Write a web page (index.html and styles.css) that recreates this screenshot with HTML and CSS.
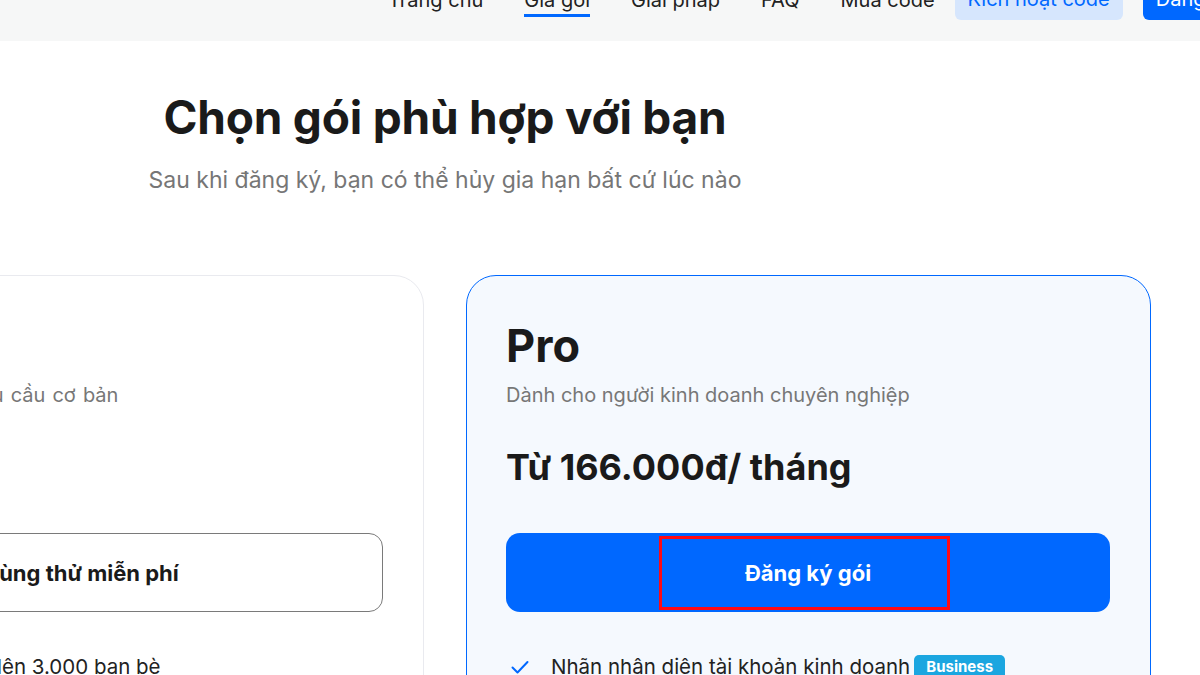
FILE: index.html
```html
<!DOCTYPE html>
<html lang="vi">
<head>
<meta charset="utf-8">
<title>Chọn gói</title>
<link rel="stylesheet" href="styles.css">
</head>
<body>
<header class="topbar">
  <nav class="nav">
    <a class="nav-link">Trang chủ</a>
    <a class="nav-link active">Giá gói</a>
    <a class="nav-link">Giải pháp</a>
    <a class="nav-link">FAQ</a>
    <a class="nav-link">Mua code</a>
    <a class="nav-btn light">Kích hoạt code</a>
    <a class="nav-btn solid">Đăng nhập</a>
  </nav>
</header>
<main class="pricing">
  <h1 class="title">Chọn gói phù hợp với bạn</h1>
  <p class="subtitle">Sau khi đăng ký, bạn có thể hủy gia hạn bất cứ lúc nào</p>
  <div class="cards">
    <section class="card">
      <h2 class="plan">Free</h2>
      <p class="plan-desc">Dành cho người có nhu cầu cơ bản</p>
      <p class="price">Miễn phí</p>
      <button class="cta outline">Dùng thử miễn phí</button>
      <ul class="features">
        <li><span class="check"><svg viewBox="0 0 20 20" width="20" height="20"><path d="M2.5 10.5 L7.5 15.5 L17.5 5" fill="none" stroke="#0068ff" stroke-width="2" stroke-linecap="round" stroke-linejoin="round"/></svg></span>Kết bạn với tối đa lên 3.000 bạn bè</li>
      </ul>
    </section>
    <section class="card pro">
      <h2 class="plan">Pro</h2>
      <p class="plan-desc">Dành cho người kinh doanh chuyên nghiệp</p>
      <p class="price">Từ 166.000đ/ tháng</p>
      <button class="cta solid">Đăng ký gói<span class="mark"></span></button>
      <ul class="features">
        <li><span class="check"><svg viewBox="0 0 20 20" width="20" height="20"><path d="M2.5 10.5 L7.5 15.5 L17.5 5" fill="none" stroke="#0068ff" stroke-width="2" stroke-linecap="round" stroke-linejoin="round"/></svg></span>Nhãn nhận diện tài khoản kinh doanh <span class="badge">Business</span></li>
      </ul>
    </section>
  </div>
</main>
</body>
</html>
```
FILE: styles.css
```css
* { box-sizing: border-box; }
html, body { margin: 0; padding: 0; }
body {
  width: 1200px;
  height: 675px;
  overflow: hidden;
  background: #ffffff;
  font-family: Inter, "Noto Sans", "Liberation Sans", sans-serif;
  color: #1a1a1a;
}
.topbar {
  height: 41px;
  background: #f6f7f7;
  display: flex;
  align-items: flex-end;
  overflow: hidden;
}
.nav {
  display: flex;
  align-items: flex-end;
  padding-left: 388px;
  margin-bottom: 21px;
  white-space: nowrap;
}
.nav-link {
  font-size: 20px;
  line-height: 22px;
  color: #222;
  margin-right: 41px;
  padding-bottom: 3px;
  border-bottom: 3px solid transparent;
  margin-bottom: 3px;
}
.nav-link.active { border-bottom-color: #0068ff; }
.nav-link:nth-child(5) { margin-right: 20px; }
.nav-btn {
  font-size: 20px;
  height: 42px;
  display: flex;
  align-items: center;
  padding: 0 13px;
  border-radius: 6px;
  margin-right: 20px;
}
.nav-btn.light { background: #d6e6fd; color: #0068ff; }
.nav-btn.solid { background: #0068ff; color: #fff; }
.pricing {
  width: 1412px;
  margin-left: -261px;
  display: flex;
  flex-direction: column;
  align-items: center;
}
.title {
  margin: 48px 0 0;
  font-size: 46px;
  line-height: 56px;
  font-weight: 700;
  color: #1a1a1a;
  letter-spacing: -0.2px;
}
.subtitle {
  margin: 20px 0 0;
  font-size: 23px;
  line-height: 30px;
  color: #767676;
}
.cards {
  margin-top: 80px;
  display: flex;
  gap: 42px;
}
.card {
  width: 685px;
  height: 460px;
  border: 1px solid #e9eaef;
  border-radius: 30px;
  background: #fff;
  padding: 44px 39px 0;
}
.card.pro {
  background: #f5f9fe;
  border-color: #0068ff;
}
.plan {
  margin: 0;
  font-size: 45px;
  line-height: 52px;
  font-weight: 700;
  color: #1a1a1a;
}
.plan-desc {
  margin: 9px 0 0;
  font-size: 20px;
  line-height: 28px;
  color: #777;
}
.card:first-child .plan-desc { word-spacing: 1.5px; }
.price {
  margin: 36px 0 0;
  font-size: 36px;
  line-height: 44px;
  font-weight: 700;
  color: #1a1a1a;
}
.cta {
  margin-top: 44px;
  width: 604px;
  height: 79px;
  border-radius: 14px;
  font-family: inherit;
  font-size: 22px;
  font-weight: 700;
  position: relative;
  display: block;
}
.cta.outline {
  background: #fff;
  border: 1px solid #7a7a7a;
  color: #1a1a1a;
}
.cta.solid {
  background: #0068ff;
  border: none;
  color: #fff;
}
.mark {
  position: absolute;
  left: 153px;
  top: 3px;
  width: 291px;
  height: 74px;
  border: 3px solid #ff0a14;
}
.features {
  list-style: none;
  margin: 41px 0 0;
  padding: 0;
}
.features li {
  display: flex;
  align-items: center;
  font-size: 20.5px;
  line-height: 28px;
  color: #222;
}
.check {
  width: 45px;
  display: flex;
  align-items: center;
  padding-left: 4px;
}
.badge {
  margin-left: 4px;
  background: #1ba6e0;
  color: #fff;
  font-size: 15px;
  font-weight: 700;
  line-height: 24px;
  padding: 0 12px;
  border-radius: 5px;
}
```
